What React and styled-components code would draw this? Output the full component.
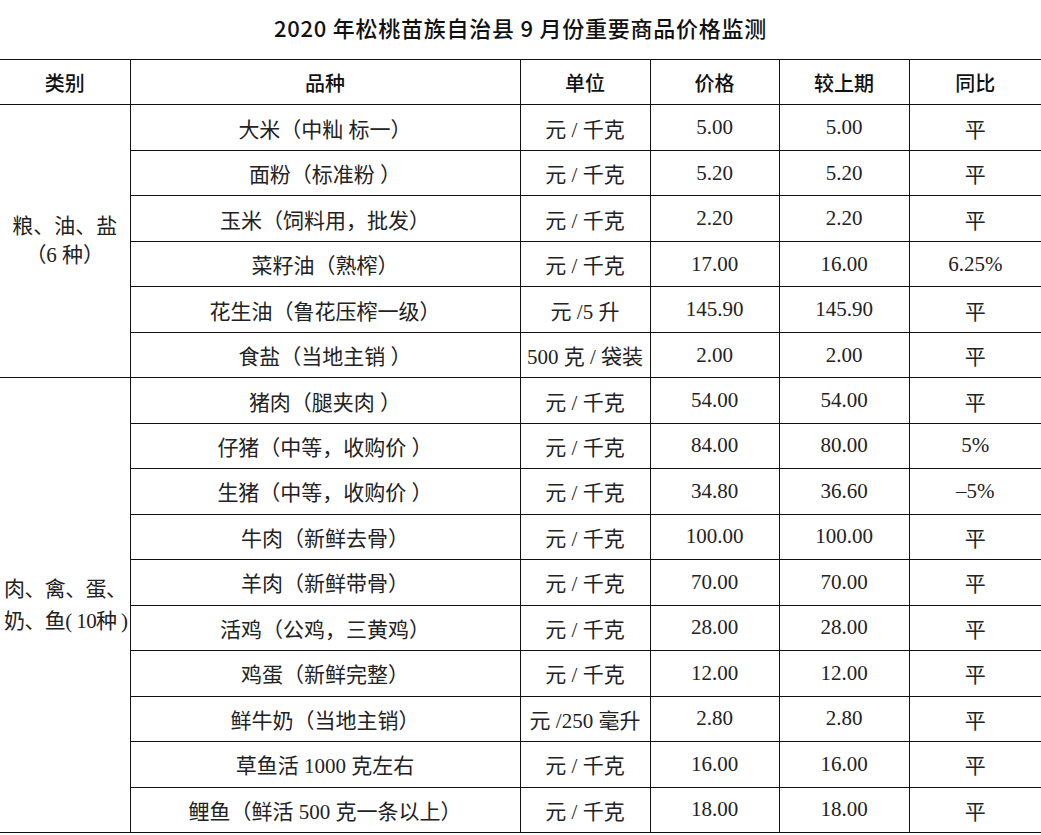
import React from 'react';
import styled, { createGlobalStyle } from 'styled-components';

const GlobalStyle = createGlobalStyle`
  html, body {
    margin: 0;
    padding: 0;
    background: #fff;
  }
  body {
    font-family: "Liberation Serif", "Noto Sans CJK SC", serif;
    color: #222;
  }
`;

const Page = styled.div`
  width: 1041px;
  height: 835px;
  overflow: hidden;
  background: #fff;
`;

const Title = styled.h1`
  margin: 0;
  height: 59px;
  display: flex;
  align-items: center;
  justify-content: center;
  padding-bottom: 5px;
  box-sizing: border-box;
  font-family: "Noto Sans CJK SC", sans-serif;
  font-size: 22px;
  font-weight: 500;
  color: #111;
  letter-spacing: 0.75px;
`;

const Table = styled.table`
  width: 1041px;
  border-collapse: collapse;
  table-layout: fixed;
`;

const Row = styled.tr`
  height: 45.47px;
`;

const Head = styled.th`
  border-top: 1px solid #111;
  border-bottom: 1px solid #111;
  border-left: ${(p) => (p.$first ? 'none' : '1px solid #111')};
  padding: 0;
  font-family: "Noto Sans CJK SC", sans-serif;
  font-size: 20px;
  font-weight: 500;
  color: #111;
  text-align: center;
  vertical-align: middle;
`;

const Cell = styled.td`
  border-bottom: 1px solid #111;
  border-left: 1px solid #111;
  padding: 0;
  font-size: 21px;
  text-align: center;
  vertical-align: middle;
  white-space: nowrap;
  color: #222;
`;

const Category = styled.td`
  border-bottom: 1px solid #111;
  padding: 0 0 0 ${(p) => (p.$left ? '4px' : '0')};
  font-size: 21px;
  letter-spacing: ${(p) => (p.$left ? '-0.6px' : '0')};
  line-height: ${(p) => (p.$left ? '32px' : '29px')};
  text-align: ${(p) => (p.$left ? 'left' : 'center')};
  vertical-align: middle;
  white-space: nowrap;
  color: #222;
`;

const columns = [
  { label: '类别', width: 130 },
  { label: '品种', width: 390 },
  { label: '单位', width: 130 },
  { label: '价格', width: 129 },
  { label: '较上期', width: 130 },
  { label: '同比', width: 132 },
];

const groups = [
  {
    name: (
      <>
        粮、油、盐
        <br />
        （6 种）
      </>
    ),
    left: false,
    items: [
      ['大米（中籼 标一）', '元 / 千克', '5.00', '5.00', '平'],
      ['面粉（标准粉 ）', '元 / 千克', '5.20', '5.20', '平'],
      ['玉米（饲料用，批发）', '元 / 千克', '2.20', '2.20', '平'],
      ['菜籽油（熟榨）', '元 / 千克', '17.00', '16.00', '6.25%'],
      ['花生油（鲁花压榨一级）', '元 /5 升', '145.90', '145.90', '平'],
      ['食盐（当地主销 ）', '500 克 / 袋装', '2.00', '2.00', '平'],
    ],
  },
  {
    name: (
      <>
        肉、禽、蛋、
        <br />
        奶、鱼( 10种 )
      </>
    ),
    left: true,
    items: [
      ['猪肉（腿夹肉 ）', '元 / 千克', '54.00', '54.00', '平'],
      ['仔猪（中等，收购价 ）', '元 / 千克', '84.00', '80.00', '5%'],
      ['生猪（中等，收购价 ）', '元 / 千克', '34.80', '36.60', '–5%'],
      ['牛肉（新鲜去骨）', '元 / 千克', '100.00', '100.00', '平'],
      ['羊肉（新鲜带骨）', '元 / 千克', '70.00', '70.00', '平'],
      ['活鸡（公鸡，三黄鸡）', '元 / 千克', '28.00', '28.00', '平'],
      ['鸡蛋（新鲜完整）', '元 / 千克', '12.00', '12.00', '平'],
      ['鲜牛奶（当地主销）', '元 /250 毫升', '2.80', '2.80', '平'],
      ['草鱼活 1000 克左右', '元 / 千克', '16.00', '16.00', '平'],
      ['鲤鱼（鲜活 500 克一条以上）', '元 / 千克', '18.00', '18.00', '平'],
    ],
  },
];

export default function App() {
  return (
    <Page>
      <GlobalStyle />
      <Title>2020 年松桃苗族自治县 9 月份重要商品价格监测</Title>
      <Table>
        <colgroup>
          {columns.map((c) => (
            <col key={c.label} style={{ width: c.width }} />
          ))}
        </colgroup>
        <thead>
          <Row>
            {columns.map((c, i) => (
              <Head key={c.label} $first={i === 0}>
                {c.label}
              </Head>
            ))}
          </Row>
        </thead>
        <tbody>
          {groups.map((g, gi) =>
            g.items.map((item, ii) => (
              <Row key={`${gi}-${ii}`}>
                {ii === 0 && (
                  <Category rowSpan={g.items.length} $left={g.left}>
                    {g.name}
                  </Category>
                )}
                {item.map((v, vi) => (
                  <Cell key={vi}>{v}</Cell>
                ))}
              </Row>
            ))
          )}
        </tbody>
      </Table>
    </Page>
  );
}
